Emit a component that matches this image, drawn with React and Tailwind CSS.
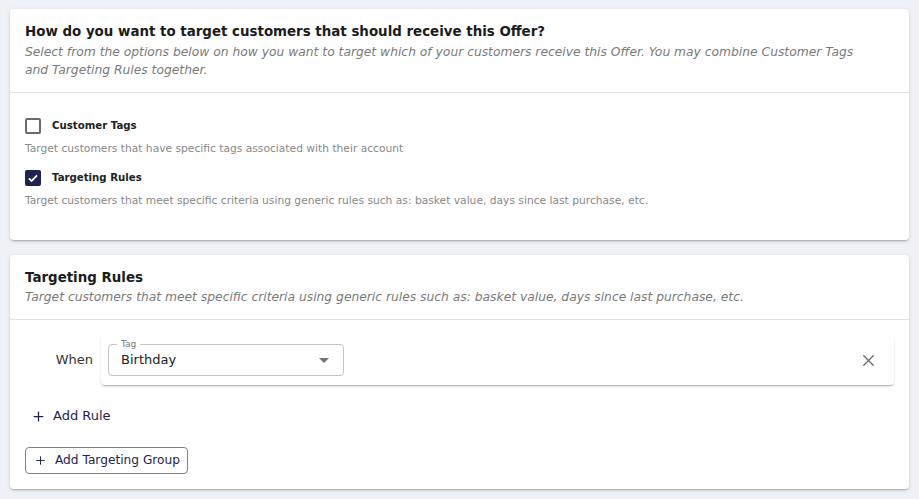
import { Plus, X } from 'lucide-react';

const font = { fontFamily: '"DejaVu Sans", "Noto Sans", sans-serif' };

function Checkbox({ checked }) {
  if (checked) {
    return (
      <span className="flex h-[16px] w-[16px] items-center justify-center rounded-[2px] bg-[#1e2350]">
        <svg viewBox="0 0 24 24" className="h-[14px] w-[14px]" fill="none" stroke="white" strokeWidth="3">
          <path d="M5 12.5l4.5 4.5L19 7.5" />
        </svg>
      </span>
    );
  }
  return <span className="block h-[16px] w-[16px] rounded-[2px] border-2 border-[#6b6b6b]" />;
}

function Option({ checked, label, hint, first }) {
  return (
    <div className={first ? '' : 'mt-[9px]'}>
      <label className="flex h-[24px] items-center gap-[11px]">
        <Checkbox checked={checked} />
        <span className="text-[10.2px] font-bold text-[#222]">{label}</span>
      </label>
      <p className="mt-[3px] text-[10.7px] leading-[16px] text-[#888]">{hint}</p>
    </div>
  );
}

function CardHeader({ title, children, pad, lead }) {
  return (
    <div className={`border-b border-[#e2e2e2] px-[15px] ${pad}`}>
      <h2 className={`text-[13.4px] font-bold text-[#1c1c1c] ${lead}`}>{title}</h2>
      <p className="text-[12.3px] italic leading-[18px] text-[#7a7a7a]">{children}</p>
    </div>
  );
}

export default function App() {
  return (
    <div className="min-h-screen bg-[#eef1f5] px-[10px] pt-[9px]" style={font}>
      {/* who gets the offer */}
      <section className="rounded-[4px] bg-white pt-[12px] shadow-[0_2px_2px_-1px_rgba(0,0,0,0.25),0_1px_4px_rgba(0,0,0,0.12)]">
        <CardHeader title="How do you want to target customers that should receive this Offer?" pad="pb-[13px]" lead="leading-[22px]">
          Select from the options below on how you want to target which of your customers receive this Offer. You may
          combine Customer Tags
          <br />
          and Targeting Rules together.
        </CardHeader>
        <div className="px-[15px] pb-[31px] pt-[21px]">
          <Option first label="Customer Tags" hint="Target customers that have specific tags associated with their account" />
          <Option
            checked
            label="Targeting Rules"
            hint="Target customers that meet specific criteria using generic rules such as: basket value, days since last purchase, etc."
          />
        </div>
      </section>

      {/* rule builder */}
      <section className="mt-[15px] rounded-[4px] bg-white pt-[12px] shadow-[0_2px_2px_-1px_rgba(0,0,0,0.25),0_1px_4px_rgba(0,0,0,0.12)]">
        <CardHeader title="Targeting Rules" pad="pb-[13px]" lead="leading-[21px]">
          Target customers that meet specific criteria using generic rules such as: basket value, days since last purchase, etc.
        </CardHeader>
        <div className="px-[15px] pb-[15px] pt-[15px]">
          <div className="flex items-center">
            <span className="w-[68px] text-right text-[13px] text-[#333]">When</span>
            <div className="ml-[8px] flex h-[50px] flex-1 items-center rounded-[4px] bg-white pl-[7px] pr-[16px] shadow-[0_2px_2px_-1px_rgba(0,0,0,0.3),0_1px_3px_rgba(0,0,0,0.08)]">
              <div className="relative flex h-[32px] w-[236px] items-center rounded-[4px] border border-[#c4c4c4] pl-[12px] pr-[14px]">
                <span className="absolute -top-[7px] left-[8px] bg-white px-[4px] text-[9px] leading-[12px] text-[#777]">Tag</span>
                <span className="flex-1 text-[13px] text-[#222]">Birthday</span>
                <svg viewBox="0 0 10 5" className="h-[5px] w-[10px]">
                  <path d="M0 0h10L5 5z" fill="#757575" />
                </svg>
              </div>
              <div className="flex-1" />
              <X className="h-[19px] w-[19px] text-[#666]" strokeWidth={1.6} />
            </div>
          </div>
          <button className="mt-[19px] flex h-[24px] items-center gap-[7px] pl-[6px] text-[13px] text-[#1e2350]">
            <Plus className="h-[15px] w-[15px]" strokeWidth={2} />
            Add Rule
          </button>
          <button className="mt-[19px] flex h-[27px] items-center gap-[8px] rounded-[4px] border border-[#7c7f9a] pl-[8px] pr-[7px] text-[12.2px] text-[#1e2350]">
            <Plus className="h-[13px] w-[13px]" strokeWidth={1.8} />
            Add Targeting Group
          </button>
        </div>
      </section>
    </div>
  );
}
